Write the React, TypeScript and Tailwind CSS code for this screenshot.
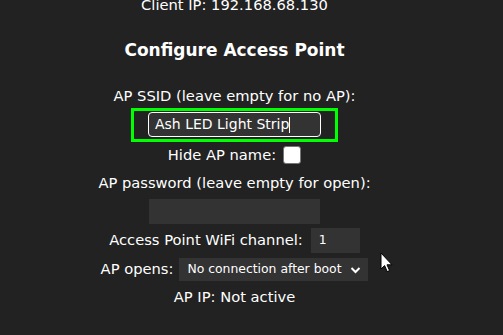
const Cursor = () => (
  <svg className="absolute left-[380px] top-[252px]" width="14" height="22" viewBox="0 0 14 22">
    <path d="M1 1 L1 17 L4.6 13.6 L7.2 19.6 L9.6 18.6 L7 12.8 L12 12.8 Z" fill="#fff" stroke="#000" strokeWidth="1" strokeLinejoin="round" />
  </svg>
);

const Row = ({ children, className = '' }: { children: React.ReactNode; className?: string }) => (
  <div className={`flex items-center justify-center whitespace-nowrap ${className}`}>{children}</div>
);

export default function App() {
  return (
    <div className="relative w-[503px] h-[335px] overflow-hidden bg-[#222] text-white font-['DejaVu_Sans',Verdana,sans-serif] text-[14.7px]">
      <div className="w-[469px] flex flex-col items-center mt-[-9px]">
        <Row className="h-[28px]">Client IP: 192.168.68.130</Row>
        <h3 className="mt-[18px] h-[28px] flex items-center font-bold text-[17px]">Configure Access Point</h3>
        <Row className="mt-[18px] h-[26px]">AP SSID (leave empty for no AP):</Row>
        <div className="mt-[-1px] border-[3px] border-[#00ff00] px-[14px] pt-[1px] pb-[2px]">
          <div className="w-[173px] h-[25px] rounded-[4px] border border-white bg-[#333] flex items-center px-[6px] text-[14px]">
            <span>Ash LED Light Strip</span>
            <span className="w-px h-[16px] bg-white" />
          </div>
        </div>
        <Row className="h-[26px] gap-[7px]">
          <span>Hide AP name:</span>
          <span className="w-[18px] h-[18px] rounded-[3px] bg-white border border-[#767676]" />
        </Row>
        <Row className="mt-[2px] h-[26px]">AP password (leave empty for open):</Row>
        <div className="mt-[3px] w-[171px] h-[25px] bg-[#333]" />
        <Row className="mt-[4px] h-[25px] gap-[8px]">
          <span>Access Point WiFi channel:</span>
          <span className="w-[49px] h-[25px] bg-[#333] flex items-center pl-[8px] text-[12.4px]">1</span>
        </Row>
        <Row className="mt-[5px] h-[23px] gap-[6px]">
          <span>AP opens:</span>
          <span className="w-[189px] h-[23px] bg-[#333] flex items-center justify-between pl-[8px] pr-[7px] text-[12.4px]">
            <span>No connection after boot</span>
            <svg width="11" height="8" viewBox="0 0 11 8">
              <path d="M1.5 2 L5.5 6 L9.5 2" fill="none" stroke="#fff" strokeWidth="2" />
            </svg>
          </span>
        </Row>
        <Row className="mt-[3px] h-[26px]">AP IP: Not active</Row>
      </div>
      <Cursor />
    </div>
  );
}
